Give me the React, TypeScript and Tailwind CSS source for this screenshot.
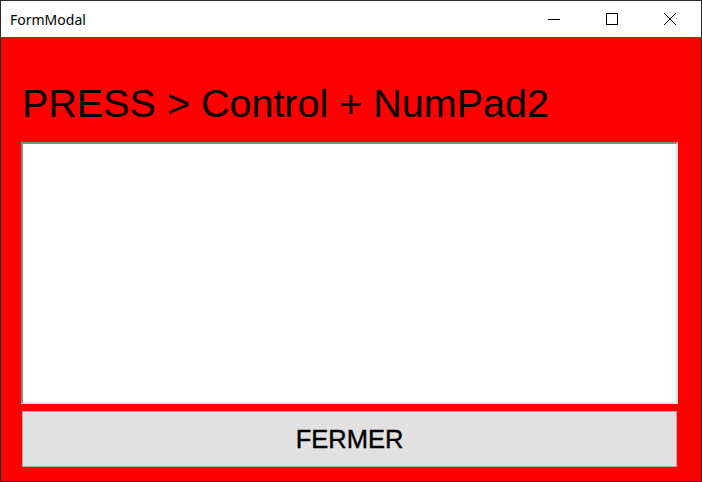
export default function App() {
  return (
    <div className="w-[702px] h-[482px] bg-[#2b2b2b] p-px flex flex-col">
      {/* barre de titre */}
      <div className="h-[36px] bg-white flex items-center shrink-0">
        <span className="pl-[9px] text-[14px] text-black font-['Noto_Sans',sans-serif] flex-1">FormModal</span>
        <div className="w-[64px] h-full flex items-center justify-center">
          <svg width="12" height="12" viewBox="0 0 12 12">
            <line x1="0" y1="6.5" x2="12" y2="6.5" stroke="#000" strokeWidth="1" />
          </svg>
        </div>
        <div className="w-[52px] h-full flex items-center justify-center">
          <svg width="12" height="12" viewBox="0 0 12 12">
            <rect x="0.5" y="0.5" width="11" height="11" fill="none" stroke="#000" strokeWidth="1" />
          </svg>
        </div>
        <div className="w-[63px] h-full flex items-center justify-center">
          <svg width="12" height="12" viewBox="0 0 12 12">
            <path d="M0 0 L12 12 M12 0 L0 12" stroke="#000" strokeWidth="1" />
          </svg>
        </div>
      </div>
      {/* contenu */}
      <div className="flex-1 bg-[#ff0000] flex flex-col pl-[20px] pt-[46px] pb-[13px]">
        <h1 className="text-[39.5px] leading-[40px] text-black font-['Liberation_Sans',Arial,sans-serif] pl-[1px]">
          PRESS &gt; Control + NumPad2
        </h1>
        <textarea
          className="mt-[19px] h-[262px] w-[657px] bg-white resize-none outline-none border-2 border-t-[#8a8a8a] border-l-[#8a8a8a] border-b-[#e3e3e3] border-r-[#e3e3e3]"
        />
        <button className="mt-[7px] ml-[1px] h-[56px] w-[655px] bg-[#e1e1e1] border border-[#adadad] text-[25.5px] text-black [-webkit-text-stroke:0.4px_#000] font-['Liberation_Sans',Arial,sans-serif]">
          FERMER
        </button>
      </div>
    </div>
  );
}
